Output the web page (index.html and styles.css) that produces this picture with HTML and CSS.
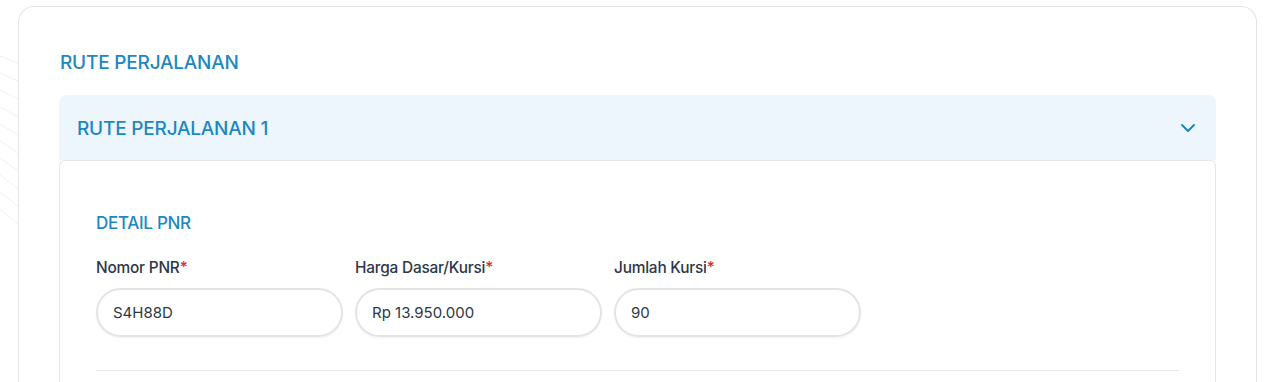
FILE: index.html
```html
<!DOCTYPE html>
<html lang="id">
<head>
<meta charset="utf-8">
<link rel="stylesheet" href="styles.css">
</head>
<body>
<svg class="bg-lines" width="60" height="300" viewBox="0 0 60 300" aria-hidden="true">
  <g fill="none" stroke="#eaf2fa" stroke-width="1">
    <path d="M-40 40 L60 80"/>
    <path d="M-40 55 L60 100"/>
    <path d="M-40 70 L60 120"/>
    <path d="M-40 85 L60 140"/>
    <path d="M-40 100 L60 160"/>
    <path d="M-40 115 L60 180"/>
    <path d="M-40 130 L60 200"/>
    <path d="M-40 145 L60 220"/>
    <path d="M-40 160 L60 240"/>
    <path d="M-40 175 L60 260"/>
  </g>
</svg>
<main class="card">
  <h2 class="section-title">RUTE PERJALANAN</h2>
  <section class="accordion">
    <div class="acc-head">
      <span class="acc-title">RUTE PERJALANAN 1</span>
      <svg class="chev" width="16" height="10" viewBox="0 0 16 10"><path d="M2 2 L8 8 L14 2" fill="none" stroke="#1b88c2" stroke-width="2" stroke-linecap="round" stroke-linejoin="round"/></svg>
    </div>
    <div class="acc-body">
      <h3 class="sub-title">DETAIL PNR</h3>
      <div class="fields">
        <label class="field">
          <span class="label">Nomor PNR<span class="req">*</span></span>
          <span class="input">S4H88D</span>
        </label>
        <label class="field">
          <span class="label">Harga Dasar/Kursi<span class="req">*</span></span>
          <span class="input">Rp 13.950.000</span>
        </label>
        <label class="field">
          <span class="label">Jumlah Kursi<span class="req">*</span></span>
          <span class="input">90</span>
        </label>
      </div>
      <hr class="divider">
    </div>
  </section>
</main>
</body>
</html>
```
FILE: styles.css
```css
* { box-sizing: border-box; }
html, body { margin: 0; padding: 0; }
body {
  width: 1270px;
  height: 382px;
  overflow: hidden;
  background: #ffffff;
  font-family: Inter, "Noto Sans", sans-serif;
  position: relative;
  padding: 6px 13px 0 18px;
}
.bg-lines {
  position: absolute;
  left: 0;
  top: 0;
  z-index: 0;
}
.card {
  position: relative;
  z-index: 1;
  background: #fff;
  border: 1px solid #e4e4e6;
  border-bottom: 0;
  border-radius: 16px 16px 0 0;
  padding: 44px 40px 0 40px;
  height: 376px;
}
.section-title {
  margin: 0 0 20px 1px;
  font-size: 19px;
  font-weight: 500;
  color: #1b88c2;
  letter-spacing: -0.2px;
  line-height: 24px;
}
.acc-head {
  height: 65px;
  background: #eef6fd;
  border-radius: 8px 8px 0 0;
  display: flex;
  align-items: center;
  justify-content: space-between;
  padding: 0 20px 0 18px;
}
.acc-title {
  font-size: 19px;
  font-weight: 500;
  color: #1b88c2;
  letter-spacing: -0.2px;
  padding-top: 2px;
}
.chev { display: block; }
.acc-body {
  border: 1px solid #e5e5ea;
  border-bottom: 0;
  border-radius: 6px 6px 0 0;
  padding: 52px 36px 0 36px;
  height: 222px;
}
.sub-title {
  margin: 0 0 25px 0;
  font-size: 17px;
  font-weight: 500;
  color: #1b88c2;
  letter-spacing: -0.3px;
  line-height: 20px;
}
.fields {
  display: flex;
  gap: 12px;
}
.field {
  display: flex;
  flex-direction: column;
  gap: 10px;
  width: 247px;
}
.label {
  font-size: 15.4px;
  font-weight: 500;
  color: #2d3748;
  letter-spacing: -0.2px;
  line-height: 20px;
}
.req { color: #d32f2f; }
.input {
  height: 49px;
  border: 2px solid #e4e4e4;
  border-radius: 25px;
  box-shadow: 0 1px 2px rgba(0,0,0,0.06);
  display: flex;
  align-items: center;
  padding: 0 15px;
  font-size: 15px;
  color: #2d3748;
  letter-spacing: 0;
}
.divider {
  margin: 33px 0 0 0;
  border: 0;
  border-top: 1px solid #e5e5e5;
}
```
